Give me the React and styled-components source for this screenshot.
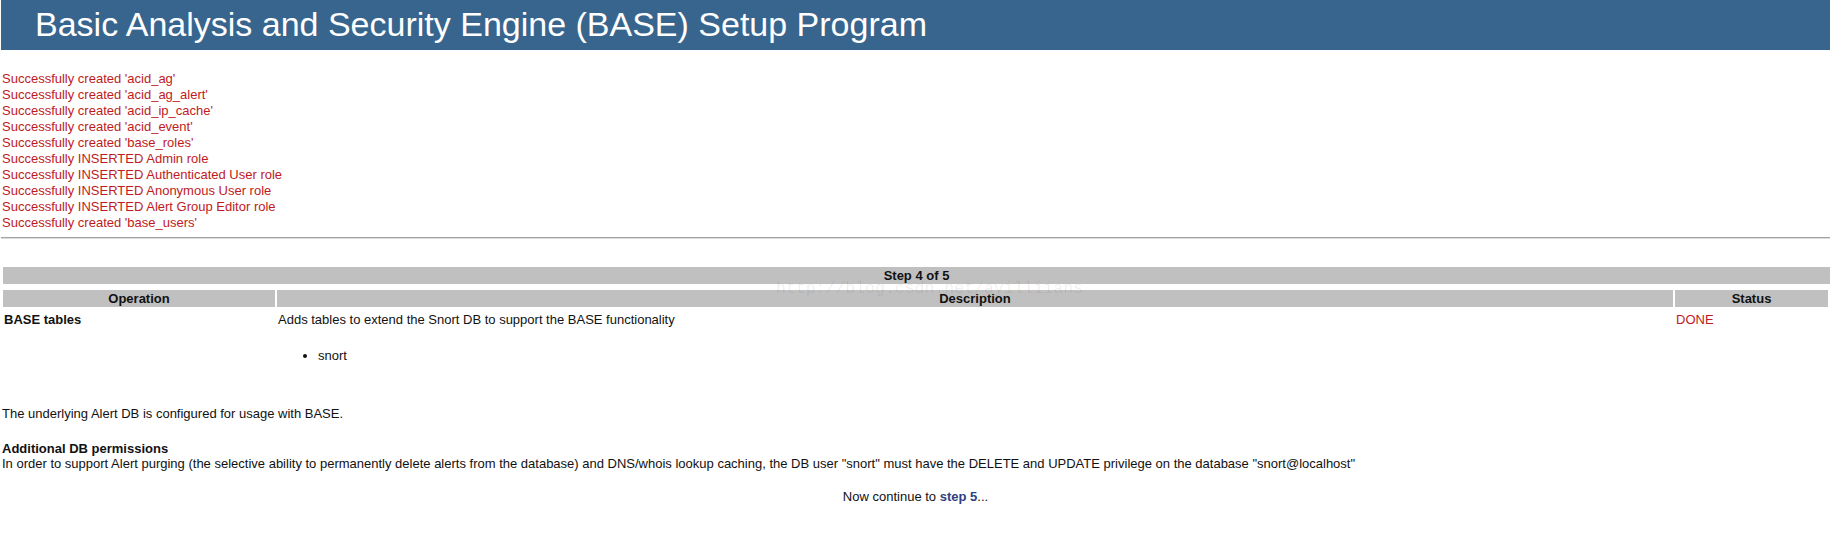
import React from "react";
import styled, { createGlobalStyle } from "styled-components";

const GlobalStyle = createGlobalStyle`
  html, body {
    margin: 0;
    padding: 0;
    background: #fff;
  }
  body {
    font-family: "Liberation Sans", Arial, sans-serif;
    font-size: 13px;
    color: #111;
  }
`;

const Page = styled.div`
  position: relative;
  padding-left: 1px;
`;

const Banner = styled.div`
  background: #37658d;
  color: #fff;
  font-size: 34px;
  line-height: 40px;
  padding: 4px 0 6px 34px;
`;

const Messages = styled.div`
  margin-top: 21px;
  padding-left: 1px;
`;

const Msg = styled.div`
  color: #c01a22;
  line-height: 16px;
`;

const Rule = styled.hr`
  margin: 6px 0 0 0;
  border: 0;
  border-top: 1px solid #a3a3a3;
  border-bottom: 1px solid #dcdcdc;
`;

const StepBar = styled.div`
  margin: 28px 0 0 2px;
  background: #c0c0c0;
  font-weight: bold;
  text-align: center;
  line-height: 15px;
  padding: 1px 0;
`;

const Table = styled.table`
  width: 100%;
  margin-top: 4px;
  border-spacing: 2px;
  border-collapse: separate;
  font-size: 13px;
`;

const Th = styled.th`
  background: #c0c0c0;
  font-weight: bold;
  text-align: center;
  line-height: 15px;
  padding: 1px 0;
  width: ${(p) => p.$w || "auto"};
`;

const Td = styled.td`
  vertical-align: top;
  line-height: 15px;
  padding: 3px 1px 0;
  font-weight: ${(p) => (p.$bold ? "bold" : "normal")};
  color: ${(p) => (p.$red ? "#c01a22" : "#111")};
`;

const List = styled.ul`
  margin: 21px 0 13px;
  padding-left: 40px;
  line-height: 15px;
`;

const Note = styled.p`
  margin: ${(p) => p.$m || "0"};
  padding-left: 1px;
  line-height: 15px;
`;

const Strong = styled.span`
  font-weight: bold;
`;

const Continue = styled.p`
  margin: 18px 0 0;
  text-align: center;
  line-height: 15px;
`;

const StepLink = styled.a`
  color: #2f3f7f;
  font-weight: bold;
  text-decoration: none;
`;

const Watermark = styled.div`
  position: absolute;
  left: 776px;
  top: 279px;
  font-family: "Liberation Mono", monospace;
  font-size: 16.5px;
  color: rgba(0, 0, 0, 0.07);
  pointer-events: none;
  white-space: nowrap;
`;

const messages = [
  "Successfully created 'acid_ag'",
  "Successfully created 'acid_ag_alert'",
  "Successfully created 'acid_ip_cache'",
  "Successfully created 'acid_event'",
  "Successfully created 'base_roles'",
  "Successfully INSERTED Admin role",
  "Successfully INSERTED Authenticated User role",
  "Successfully INSERTED Anonymous User role",
  "Successfully INSERTED Alert Group Editor role",
  "Successfully created 'base_users'",
];

export default function App() {
  return (
    <Page>
      <GlobalStyle />
      <Banner>Basic Analysis and Security Engine (BASE) Setup Program</Banner>

      <Messages>
        {messages.map((m) => (
          <Msg key={m}>{m}</Msg>
        ))}
      </Messages>
      <Rule />

      <StepBar>Step 4 of 5</StepBar>
      <Table>
        <thead>
          <tr>
            <Th $w="272px">Operation</Th>
            <Th>Description</Th>
            <Th $w="153px">Status</Th>
          </tr>
        </thead>
        <tbody>
          <tr>
            <Td $bold>BASE tables</Td>
            <Td>
              Adds tables to extend the Snort DB to support the BASE functionality
              <List>
                <li>snort</li>
              </List>
            </Td>
            <Td $red>DONE</Td>
          </tr>
        </tbody>
      </Table>

      <Note $m="28px 0 0">The underlying Alert DB is configured for usage with BASE.</Note>
      <Note $m="20px 0 0">
        <Strong>Additional DB permissions</Strong>
        <br />
        In order to support Alert purging (the selective ability to permanently delete alerts
        from the database) and DNS/whois lookup caching, the DB user "snort" must have the
        DELETE and UPDATE privilege on the database "snort@localhost"
      </Note>

      <Continue>
        Now continue to <StepLink href="#">step 5</StepLink>...
      </Continue>

      <Watermark>http://blog.csdn.net/ayilliians</Watermark>
    </Page>
  );
}
